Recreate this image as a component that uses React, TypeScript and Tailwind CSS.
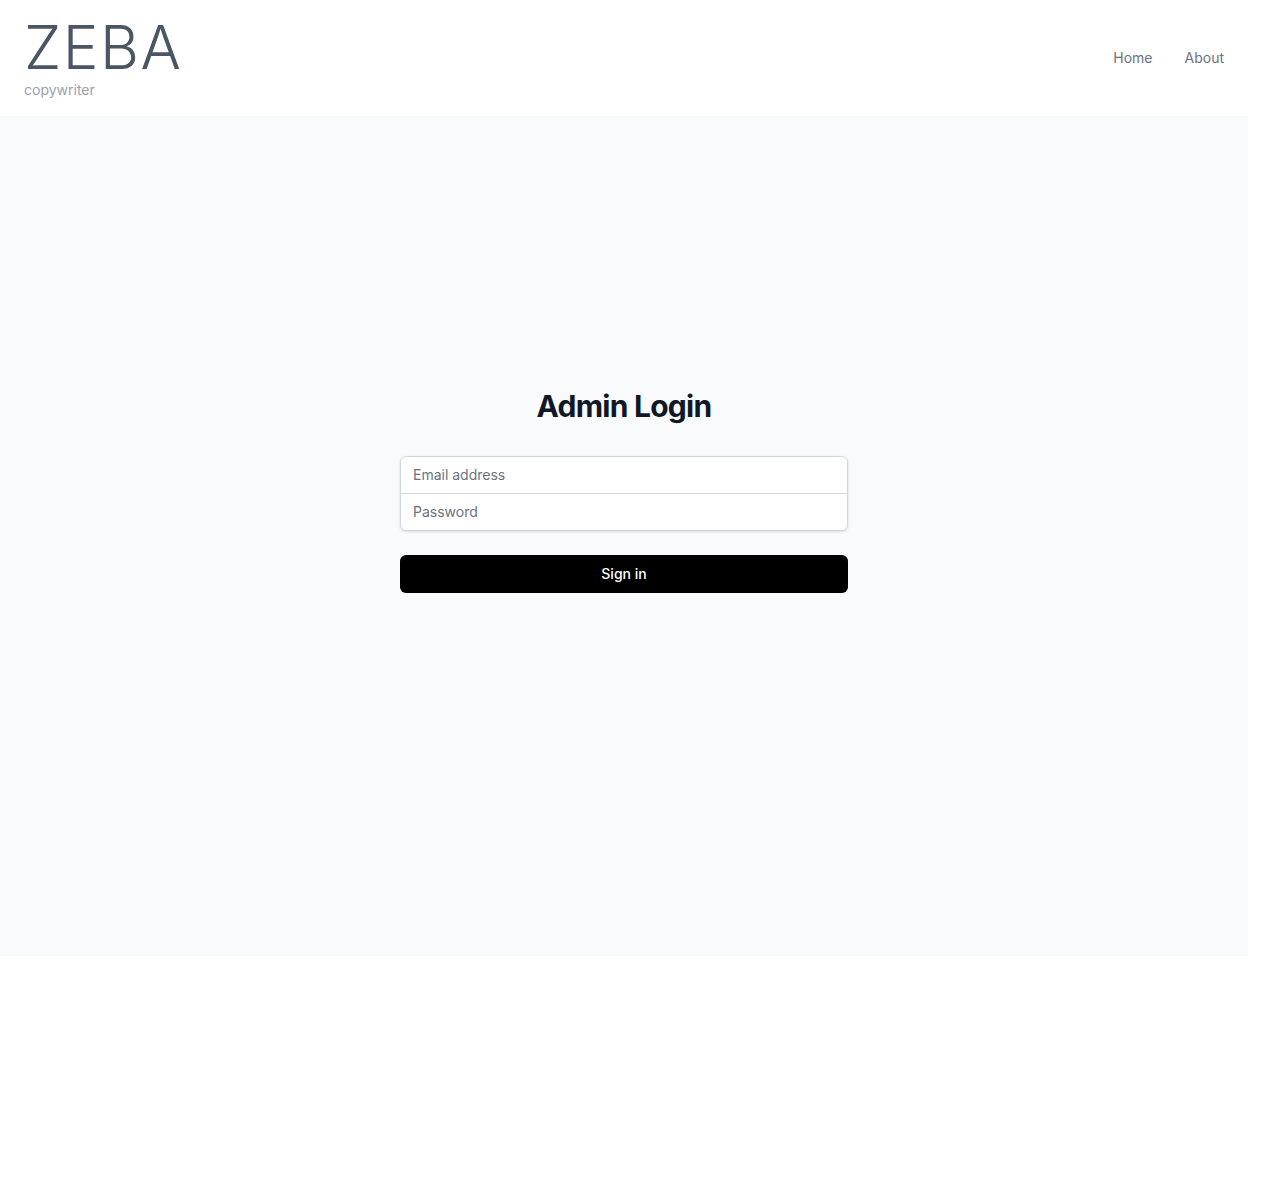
function Header() {
    return (
        <header className="flex items-center justify-between bg-white px-6 h-[116px]">
            <div className="flex flex-col">
                <span className="text-6xl font-light tracking-wide text-gray-600 leading-none">ZEBA</span>
                <span className="mt-[3px] text-sm text-gray-400">copywriter</span>
            </div>
            <nav className="flex gap-8 text-sm text-gray-500">
                <a href="#" className="hover:text-gray-900">Home</a>
                <a href="#" className="hover:text-gray-900">About</a>
            </nav>
        </header>
    );
}

function LoginForm() {
    return (
        <div className="flex h-[840px] flex-col items-center bg-gray-50 px-4 pt-[272px]">
            <div className="w-full max-w-md">
                <h2 className="text-center text-3xl font-bold tracking-tight text-gray-900">Admin Login</h2>
                <form className="mt-8">
                    <div className="rounded-md shadow-sm">
                        <input
                            type="email"
                            placeholder="Email address"
                            className="block w-full rounded-t-md border border-gray-300 bg-white px-3 py-2 text-sm text-gray-900 placeholder-gray-500 focus:outline-none"
                        />
                        <input
                            type="password"
                            placeholder="Password"
                            className="-mt-px block w-full rounded-b-md border border-gray-300 bg-white px-3 py-2 text-sm text-gray-900 placeholder-gray-500 focus:outline-none"
                        />
                    </div>
                    <button
                        type="submit"
                        className="mt-6 flex w-full justify-center rounded-md bg-black px-4 py-[9px] text-sm font-medium text-white"
                    >
                        Sign in
                    </button>
                </form>
            </div>
        </div>
    );
}

export default function App() {
    return (
        <div className="w-[1248px] font-['Inter',sans-serif]">
            <Header />
            <LoginForm />
        </div>
    );
}
